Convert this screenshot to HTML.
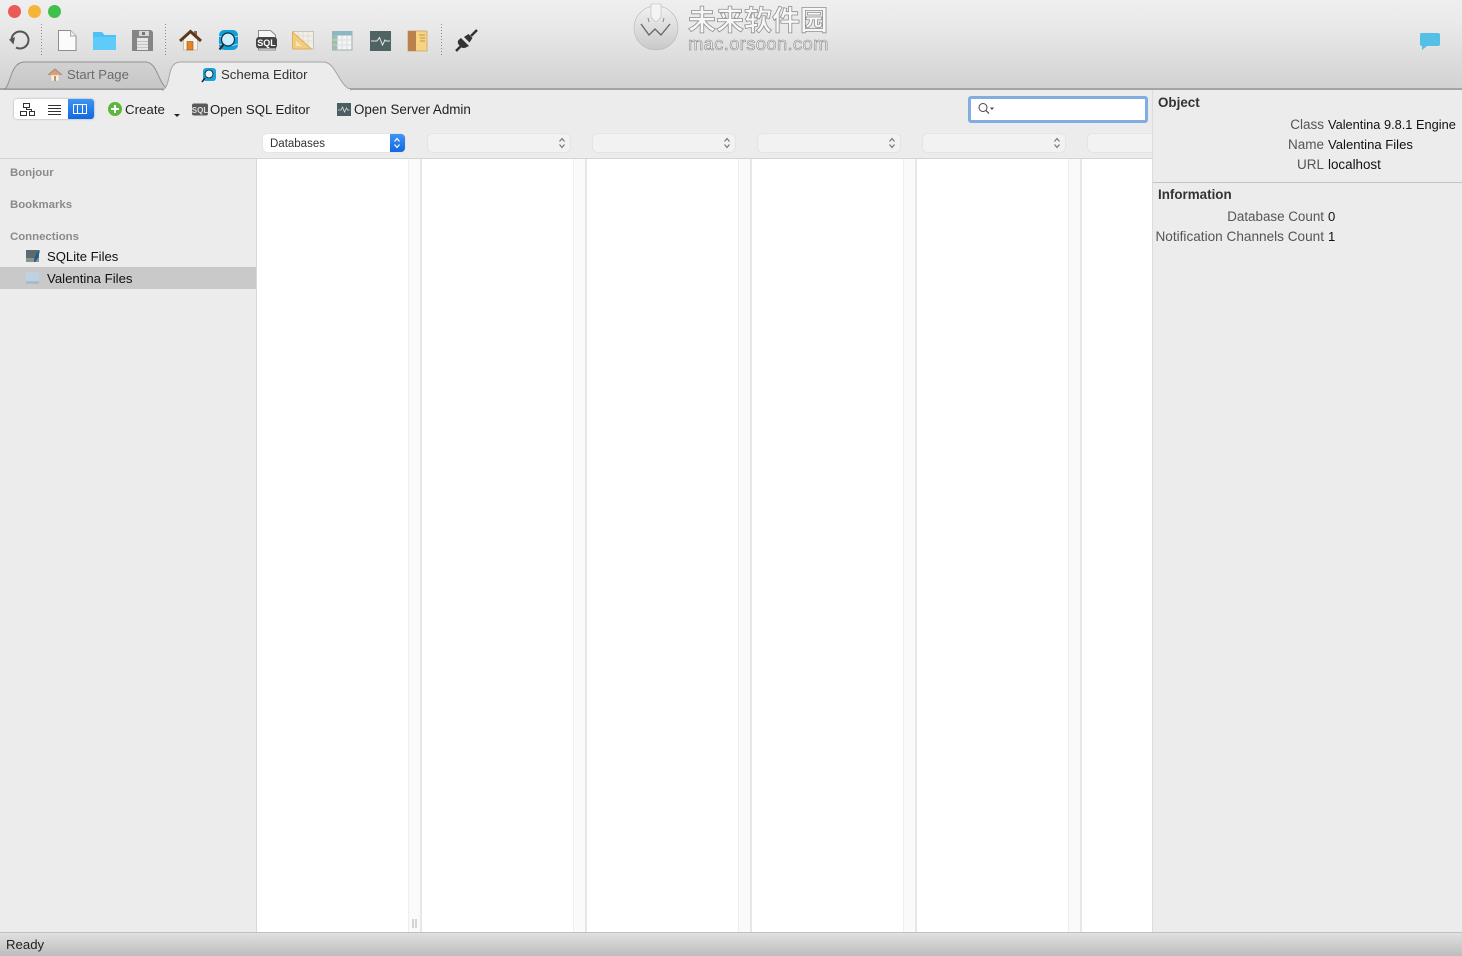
<!DOCTYPE html>
<html><head><meta charset="utf-8"><style>
*{box-sizing:border-box}
html,body{margin:0;padding:0}
body{width:1462px;height:956px;position:relative;overflow:hidden;background:#ececec;font-family:"Liberation Sans","Noto Sans CJK SC",sans-serif;font-size:13.2px;color:#1c1c1c}
.a{position:absolute;white-space:nowrap}
.lab{color:#555;text-align:right;right:138px;font-size:13.5px}
.val{left:1328px;color:#111;font-size:13.1px}
.h{font-weight:bold;color:#333;font-size:13.4px}
.sh{font-weight:bold;color:#8a8a8a;font-size:11.400px;left:10px}
.sel{position:absolute;top:134px;height:18px;width:142px;background:#f2f2f2;border-radius:4px;box-shadow:0 0 1px rgba(0,0,0,.22)}
.col{position:absolute;top:159px;height:773px;width:14px;background:#fafafa;border-left:1px solid #eee;border-right:2px solid #e7e7e7}
svg{position:absolute;overflow:visible}
.dot{position:absolute;top:24px;height:32px;width:1px;background:repeating-linear-gradient(#8a8a8a 0 1px,transparent 1px 3px)}
</style></head><body>
<div class="a" style="left:0;top:0;width:1462px;height:90px;background:linear-gradient(#efefef,#e9e9e9 30%,#d2d2d2);border-bottom:2px solid #a4a4a4;border-radius:5px 5px 0 0"></div>
<div class="a" style="left:8px;top:5px;width:13px;height:13px;border-radius:50%;background:#ec5a55"></div>
<div class="a" style="left:28px;top:5px;width:13px;height:13px;border-radius:50%;background:#f5b53a"></div>
<div class="a" style="left:48px;top:5px;width:13px;height:13px;border-radius:50%;background:#3fc04d"></div>
<div class="dot" style="left:41px"></div><div class="dot" style="left:165px"></div><div class="dot" style="left:441px"></div>

<!-- undo -->
<svg style="left:0;top:0" width="60" height="60"><path d="M16 47.500 A8.500 8.500 0 1 0 11.500 39.500" fill="none" stroke="#555" stroke-width="2"/><path d="M9 39.500l6-2.500-1.500 7.500z" fill="#555"/></svg>
<!-- new -->
<svg style="left:0;top:0" width="80" height="60"><path d="M58.500 30.500h12l5.500 5.500v14.500h-17.500z" fill="#fbfbfb" stroke="#8e8e8e"/><path d="M70.500 30.500v5.500h5.500" fill="#eee" stroke="#aaa"/></svg>
<!-- folder -->
<svg style="left:0;top:0" width="120" height="60"><path d="M93 32h9l2.500 3H116v15H93z" fill="#4fc0f5"/><path d="M93 37h23v13H93z" fill="#5fcbfa"/></svg>
<!-- save -->
<svg style="left:0;top:0" width="160" height="60"><path d="M132 30h19l2 2v19h-21z" fill="#858585"/><rect x="139" y="31" width="10" height="5" fill="#d6d6d6"/><rect x="142" y="32" width="3" height="3" fill="#777"/><rect x="137" y="38" width="11" height="12" fill="#e6e6e6"/><path d="M137 41.500h11M137 44.500h11M137 47.500h11" stroke="#bbb" stroke-width=".8"/></svg>
<!-- home -->
<svg style="left:0;top:0" width="210" height="60"><path d="M183.500 38v12h14V38l-7-6z" fill="#f6f3ec" stroke="#c8c0b2"/><rect x="194" y="31" width="3" height="6" fill="#8a6a4a"/><path d="M180 41l10.500-9.500L201 41" fill="none" stroke="#5b3a1c" stroke-width="3"/><rect x="187" y="41.500" width="6" height="8.500" fill="#e8811f" stroke="#8a5a2c" stroke-width=".6"/></svg>
<!-- schema -->
<svg style="left:0;top:0" width="250" height="60"><rect x="219" y="30" width="19" height="20" rx="5" fill="#12a0dd"/><path d="M219 36c4 2 15 2 19 0M219 44c4 2 15 2 19 0" stroke="#bfe6f7" fill="none" stroke-width=".8"/><circle cx="228" cy="39.500" r="6.500" fill="#cfeffc" stroke="#0f2f40" stroke-width="1.200"/><path d="M223.500 44.500l-4 5" stroke="#2a2a2a" stroke-width="2.200"/></svg>
<!-- SQL doc -->
<svg style="left:0;top:0" width="290" height="60"><path d="M258.500 30.500h12l5 4.500v15h-17z" fill="#f6f6f6" stroke="#8a8a8a"/><rect x="256" y="37" width="21" height="11.500" rx="3" fill="#454545"/><text x="266.500" y="46" font-size="9" font-weight="bold" fill="#fff" text-anchor="middle" font-family="Liberation Sans">SQL</text></svg>
<!-- ruler -->
<svg style="left:0;top:0" width="320" height="60"><rect x="292.500" y="31.500" width="21" height="17.500" fill="#f1efe8" stroke="#c8c4b4"/><path d="M298 31.500v17M303 31.500v17M308 31.500v17M292.500 36h21M292.500 41h21" stroke="#ddd8c8" stroke-width=".7"/><path d="M292.500 32l19 17h-19z" fill="#f2cd7c" stroke="#dfae57"/><path d="M296 41l5.500 5H296z" fill="#f6e7c4"/></svg>
<!-- table -->
<svg style="left:0;top:0" width="360" height="60"><rect x="332.500" y="31.500" width="19.500" height="18.500" fill="#f3f4f6" stroke="#a2aeaa"/><rect x="332" y="31" width="20" height="4.500" fill="#8fb7c2"/><rect x="332.500" y="35.500" width="5" height="14.500" fill="#9dc0ab"/><path d="M342 35.500v14M347 35.500v14M332.500 40h19M332.500 45h19" stroke="#d4dade" stroke-width=".8"/></svg>
<!-- server admin -->
<svg style="left:0;top:0" width="400" height="60"><rect x="370" y="31" width="21" height="20" fill="#4f6364"/><path d="M371 41h6l2.500-3.500 3 7.500 2.500-5 1 1h4" fill="none" stroke="#e6e6e6" stroke-width="1"/></svg>
<!-- book -->
<svg style="left:0;top:0" width="440" height="60"><rect x="408" y="31" width="19" height="20" fill="#f8d482" stroke="#c6a268" stroke-width=".8"/><rect x="408" y="31" width="8" height="20" fill="#b9824c"/><path d="M419 35h6M420 38h5M420 41h5" stroke="#b89650"/></svg>
<!-- plug -->
<svg style="left:0;top:0" width="490" height="60"><path d="M456 51l6-6" stroke="#333" stroke-width="2.500"/><path d="M461 38l8 8-3 1.500c-2 1-4 .5-5-.5l-2-2c-1.500-1.500-1.500-3.500-.5-5z" fill="#333"/><path d="M464 37l4.500-3 4 4-3 4.500z" fill="#333"/><path d="M471 36l6-6" stroke="#333" stroke-width="2.500"/></svg>

<!-- watermark -->
<svg style="left:0;top:0" width="700" height="60"><defs><linearGradient id="g" x1="0" y1="0" x2="0" y2="1"><stop offset="0" stop-color="#f1f1f1"/><stop offset="1" stop-color="#c9c9c9"/></linearGradient></defs><circle cx="656" cy="28" r="22" fill="url(#g)" stroke="#b5b5b5" stroke-width=".6"/><path d="M651 4h10v13l-5 5-5-5z" fill="#f4f4f4" stroke="#bbb" stroke-width=".6"/><path d="M641 24 L649 35 L655 29 L661 35 L670 24" fill="none" stroke="#666" stroke-width="1.300"/><path d="M648 18l1 4M664 18l-1 4" stroke="#888" stroke-width="1"/></svg>
<div class="a" style="left:688px;top:6px;font-size:28px;line-height:30px;color:#f7f7f7;-webkit-text-stroke:.8px #8f8f8f;font-weight:bold">未来软件园</div>
<div class="a" style="left:688px;top:34px;font-size:18.300px;line-height:20px;letter-spacing:.4px;color:#eee;-webkit-text-stroke:.6px #8a8a8a">mac.orsoon.com</div>

<!-- chat -->
<svg style="left:0;top:0" width="1450" height="60"><path d="M1421 33h17a2 2 0 0 1 2 2v9a2 2 0 0 1-2 2h-11l-5 4 0-4a2 2 0 0 1-2-2v-9a2 2 0 0 1 1-2z" fill="#55bfe6"/></svg>

<!-- tabs -->
<svg style="left:0;top:0" width="360" height="92"><defs><linearGradient id="t" x1="0" y1="0" x2="0" y2="1"><stop offset="0" stop-color="#d2d2d2"/><stop offset="1" stop-color="#c6c6c6"/></linearGradient></defs>
<path d="M5 89 C11 84 10 63 24 62 L146 62 C158 63 158 84 168 89z" fill="url(#t)" stroke="#8f8f8f"/>
<path d="M163 90 C172 84 166 63 180 62 L324 62 C336 63 338 84 351 90z" fill="#ececec" stroke="#a4a4a4"/>
<path d="M164 90 H350" stroke="#ececec" stroke-width="2"/>
<path d="M48 75l7-6 7 6" fill="#d9a077" stroke="#b08968" stroke-width="1"/><rect x="51" y="75" width="8" height="6" fill="#f3f0ea" stroke="#bbb" stroke-width=".5"/><rect x="54" y="76" width="2" height="5" fill="#d98b4a"/>
<rect x="203" y="68" width="13" height="13" rx="3" fill="#18a3dc"/><circle cx="209" cy="74" r="4" fill="#e8f4fa" stroke="#111" stroke-width=".8"/><path d="M205 78l-3 4" stroke="#222" stroke-width="1.500"/>
</svg>
<div class="a" style="left:67px;top:67px;color:#6b6b6b;line-height:16px;font-size:13.100px">Start Page</div>
<div class="a" style="left:221px;top:67px;color:#333;line-height:16px;font-size:13.200px">Schema Editor</div>

<!-- seg control -->
<div class="a" style="left:14px;top:99px;width:80px;height:20px;background:#fff;border-radius:3px;box-shadow:0 0 2px rgba(0,0,0,.3)"></div>
<div class="a" style="left:68px;top:99px;width:26px;height:20px;background:linear-gradient(#3d95f7,#1268e0);border-radius:0 3px 3px 0"></div>
<svg style="left:0;top:0" width="100" height="125"><g fill="none" stroke="#333" stroke-width="1"><rect x="23.500" y="103.500" width="6" height="4"/><rect x="20.500" y="111.500" width="6" height="4"/><rect x="29.500" y="111.500" width="5" height="4"/><path d="M26.500 107.500v2h5v2"/></g>
<path d="M48 105.500h13M48 108.500h13M48 111.500h13M48 114.500h13" stroke="#333"/>
<g fill="none" stroke="#fff" stroke-width="1"><rect x="73.500" y="104.500" width="13" height="9"/><path d="M77.500 104.500v9M82.500 104.500v9"/></g></svg>

<!-- create -->
<svg style="left:0;top:0" width="220" height="125"><circle cx="115" cy="109" r="7" fill="#5bb83a"/><path d="M115 105v8M111 109h8" stroke="#fff" stroke-width="2"/><path d="M174 114h6l-3 3z" fill="#222"/>
<rect x="192" y="103.500" width="16" height="12" rx="2" fill="#5a5a5a"/><text x="200" y="113" font-size="8" font-weight="bold" fill="#ddd" text-anchor="middle" font-family="Liberation Sans">SQL</text></svg>
<svg style="left:0;top:0" width="360" height="125"><rect x="337" y="103" width="14" height="13" fill="#4b5f60"/><path d="M338 110h3l1.500-3 2 5 2-4 1 2h2" fill="none" stroke="#ddd" stroke-width=".8"/></svg>
<div class="a" style="left:125px;top:102px;line-height:16px;color:#222;font-size:13.300px">Create</div>
<div class="a" style="left:210px;top:102px;line-height:16px;color:#222">Open SQL Editor</div>
<div class="a" style="left:354px;top:102px;line-height:16px;color:#222;font-size:13.400px">Open Server Admin</div>

<!-- search -->
<div class="a" style="left:968px;top:96px;width:180px;height:27px;background:#fff;border:3px solid #82ade2;border-radius:3px"></div>
<svg style="left:0;top:0" width="1000" height="120"><circle cx="983" cy="107.500" r="4" fill="none" stroke="#444" stroke-width="1"/><path d="M986 110.500l3 3" stroke="#444" stroke-width="1.200"/><path d="M990 107.500h4l-2 2.500z" fill="#444"/></svg>

<!-- selects -->
<div class="sel" style="left:263px;width:142px;background:#fff"></div>
<div class="a" style="left:390px;top:134px;width:15px;height:18px;background:linear-gradient(#3d95f7,#1268e0);border-radius:0 4px 4px 0"></div>
<div class="a" style="left:270px;top:136px;font-size:11.500px;line-height:16px;color:#333">Databases</div>
<div class="sel" style="left:428px"></div><div class="sel" style="left:593px"></div><div class="sel" style="left:758px"></div><div class="sel" style="left:923px"></div>
<div class="sel" style="left:1088px;width:64px;border-radius:4px 0 0 4px"></div>
<svg style="left:0;top:0" width="1100" height="160"><g fill="none" stroke-width="1.200" stroke="#777"><path d="M559.500 141.500l2.500-3 2.500 3M559.500 144.500l2.500 3 2.500-3M724.500 141.500l2.500-3 2.500 3M724.500 144.500l2.500 3 2.500-3M889.500 141.500l2.500-3 2.500 3M889.500 144.500l2.500 3 2.500-3M1054.500 141.500l2.500-3 2.500 3M1054.500 144.500l2.500 3 2.500-3"/><path stroke="#fff" d="M394.500 141.500l2.500-3 2.500 3M394.500 144.500l2.500 3 2.500-3"/></g></svg>

<!-- main -->
<div class="a" style="left:0;top:158px;width:1152px;height:1px;background:#d4d4d4"></div>
<div class="a" style="left:256px;top:159px;width:896px;height:773px;background:#fff;border-left:1px solid #d8d8d8"></div>
<div class="col" style="left:408px"></div><div class="col" style="left:573px"></div><div class="col" style="left:738px"></div><div class="col" style="left:903px"></div><div class="col" style="left:1068px"></div>
<div class="a" style="left:412px;top:919px;width:5px;height:9px;border-left:2px solid #d4d4d4;border-right:2px solid #d4d4d4"></div>

<!-- sidebar -->
<div class="a sh" style="top:166px;line-height:15px">Bonjour</div>
<div class="a sh" style="top:198px;line-height:15px">Bookmarks</div>
<div class="a sh" style="top:230px;line-height:15px">Connections</div>
<div class="a" style="left:0;top:267px;width:256px;height:22px;background:#c9c9c9"></div>
<svg style="left:0;top:0" width="60" height="300"><rect x="26" y="250" width="13" height="12" fill="#5a6a6e"/><rect x="26" y="258" width="13" height="4" fill="#8b9688"/><path d="M34 262c0-5 2-9 6-12-1 5-2 9-5 12z" fill="#1f5f8f"/>
<rect x="26" y="272" width="13" height="12" fill="#bdd3e4"/><rect x="26" y="281" width="13" height="3" fill="#a9bcc9"/></svg>
<div class="a" style="left:47px;top:249px;line-height:16px;color:#111;font-size:13.100px">SQLite Files</div>
<div class="a" style="left:47px;top:271px;line-height:16px;color:#111;font-size:13.200px">Valentina Files</div>

<!-- right panel -->
<div class="a" style="left:1152px;top:90px;width:310px;height:842px;background:#ececec;border-left:1px solid #dcdcdc"></div>
<div class="a h" style="left:1158px;top:95px;line-height:16px">Object</div>
<div class="a lab" style="top:117px;line-height:16px">Class</div><div class="a val" style="top:117px;line-height:16px;font-size:12.800px">Valentina 9.8.1 Engine</div>
<div class="a lab" style="top:137px;line-height:16px">Name</div><div class="a val" style="top:137px;line-height:16px">Valentina Files</div>
<div class="a lab" style="top:157px;line-height:16px">URL</div><div class="a val" style="top:157px;line-height:16px;font-size:13.400px">localhost</div>
<div class="a" style="left:1153px;top:182px;width:309px;height:1px;background:#c4c4c4"></div>
<div class="a h" style="left:1158px;top:187px;line-height:16px">Information</div>
<div class="a lab" style="top:209px;line-height:16px;font-size:13.400px">Database Count</div><div class="a val" style="top:209px;line-height:16px">0</div>
<div class="a lab" style="top:229px;line-height:16px;font-size:13.600px">Notification Channels Count</div><div class="a val" style="top:229px;line-height:16px">1</div>

<!-- status -->
<div class="a" style="left:0;top:932px;width:1462px;height:24px;background:linear-gradient(#e0e0e0,#bdbdbd);border-top:1px solid #c0c0c0"></div>
<div class="a" style="left:6px;top:937px;line-height:16px;color:#222">Ready</div>
</body></html>
